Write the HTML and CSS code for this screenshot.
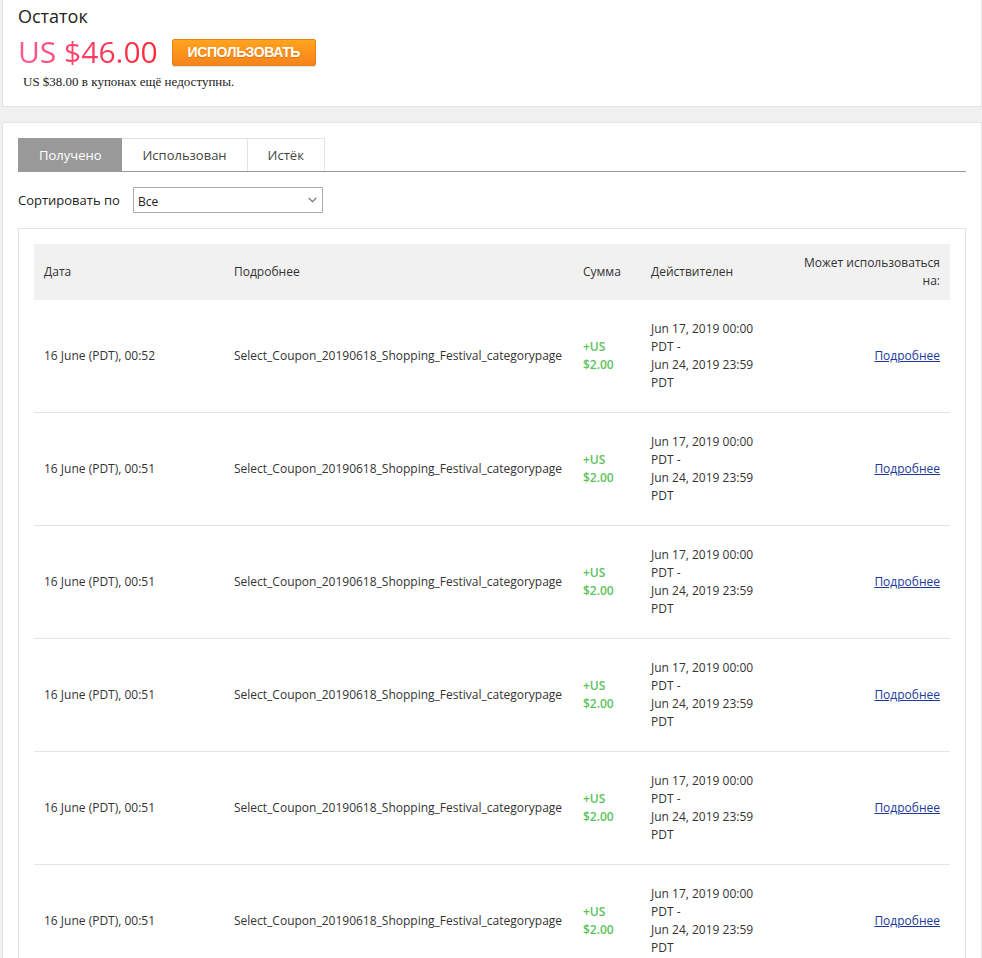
FILE: index.html
```html
<!DOCTYPE html>
<html lang="ru">
<head>
<meta charset="utf-8">
<title>Купоны</title>
<link rel="stylesheet" href="styles.css">
</head>
<body>
<section class="card balance-card">
  <h1 class="title">Остаток</h1>
  <div class="price-row">
    <span class="price">US $46.00</span>
    <button class="use-btn">ИСПОЛЬЗОВАТЬ</button>
  </div>
  <p class="note">US $38.00 в купонах ещё недоступны.</p>
</section>

<section class="card list-card">
  <div class="tabs">
    <div class="tab active">Получено</div>
    <div class="tab">Использован</div>
    <div class="tab">Истёк</div>
  </div>
  <div class="sort-row">
    <span class="sort-label">Сортировать по</span>
    <div class="select">
      <span>Все</span>
      <svg class="chev" width="9" height="6" viewBox="0 0 9 6"><path d="M0.8 1 L4.5 4.6 L8.2 1" fill="none" stroke="#777" stroke-width="1.2"/></svg>
    </div>
  </div>
  <div class="table-box">
    <table class="coupons">
      <colgroup>
        <col class="c1"><col class="c2"><col class="c3"><col class="c4"><col class="c5">
      </colgroup>
      <thead>
        <tr>
          <th>Дата</th>
          <th>Подробнее</th>
          <th>Сумма</th>
          <th>Действителен</th>
          <th class="right">Может использоваться на:</th>
        </tr>
      </thead>
      <tbody>
        <tr>
          <td>16 June (PDT), 00:52</td>
          <td>Select_Coupon_20190618_Shopping_Festival_categorypage</td>
          <td class="amount">+US $2.00</td>
          <td>Jun 17, 2019 00:00 PDT -<br>Jun 24, 2019 23:59 PDT</td>
          <td class="right"><a href="#">Подробнее</a></td>
        </tr>
        <tr>
          <td>16 June (PDT), 00:51</td>
          <td>Select_Coupon_20190618_Shopping_Festival_categorypage</td>
          <td class="amount">+US $2.00</td>
          <td>Jun 17, 2019 00:00 PDT -<br>Jun 24, 2019 23:59 PDT</td>
          <td class="right"><a href="#">Подробнее</a></td>
        </tr>
        <tr>
          <td>16 June (PDT), 00:51</td>
          <td>Select_Coupon_20190618_Shopping_Festival_categorypage</td>
          <td class="amount">+US $2.00</td>
          <td>Jun 17, 2019 00:00 PDT -<br>Jun 24, 2019 23:59 PDT</td>
          <td class="right"><a href="#">Подробнее</a></td>
        </tr>
        <tr>
          <td>16 June (PDT), 00:51</td>
          <td>Select_Coupon_20190618_Shopping_Festival_categorypage</td>
          <td class="amount">+US $2.00</td>
          <td>Jun 17, 2019 00:00 PDT -<br>Jun 24, 2019 23:59 PDT</td>
          <td class="right"><a href="#">Подробнее</a></td>
        </tr>
        <tr>
          <td>16 June (PDT), 00:51</td>
          <td>Select_Coupon_20190618_Shopping_Festival_categorypage</td>
          <td class="amount">+US $2.00</td>
          <td>Jun 17, 2019 00:00 PDT -<br>Jun 24, 2019 23:59 PDT</td>
          <td class="right"><a href="#">Подробнее</a></td>
        </tr>
        <tr>
          <td>16 June (PDT), 00:51</td>
          <td>Select_Coupon_20190618_Shopping_Festival_categorypage</td>
          <td class="amount">+US $2.00</td>
          <td>Jun 17, 2019 00:00 PDT -<br>Jun 24, 2019 23:59 PDT</td>
          <td class="right"><a href="#">Подробнее</a></td>
        </tr>
      </tbody>
    </table>
  </div>
</section>
</body>
</html>
```
FILE: styles.css
```css
html, body {
  margin: 0;
  padding: 0;
}
body {
  background: #f0f0f0;
  font-family: "Open Sans", "Noto Sans", sans-serif;
  color: #333;
}
.card {
  background: #fff;
  border: 1px solid #e4e4e4;
  margin-left: 2px;
  width: 980px;
  box-sizing: border-box;
  padding: 0 15px;
}
.balance-card {
  border-top: 0;
  padding-top: 4px;
  padding-bottom: 16px;
}
.title {
  margin: 0;
  font-size: 18px;
  line-height: 24px;
  font-weight: 400;
  color: #222;
}
.price-row {
  display: flex;
  align-items: center;
  gap: 14px;
  margin-top: 6px;
  height: 36px;
}
.price {
  font-size: 30px;
  line-height: 36px;
  background: linear-gradient(90deg, #ff5c8f 0%, #ff3d63 50%, #ff2a35 100%);
  -webkit-background-clip: text;
  background-clip: text;
  color: transparent;
}
.use-btn {
  width: 144px;
  height: 27px;
  padding: 0;
  border: 1px solid #e8811a;
  border-radius: 2px;
  background: linear-gradient(180deg, #ffa41f 0%, #fc911c 55%, #f6841d 100%);
  color: #fff;
  font-family: "Liberation Sans", Arial, sans-serif;
  font-weight: 700;
  font-size: 14px;
  letter-spacing: -0.4px;
  text-shadow: 0 1px 1px rgba(190, 90, 0, 0.5);
  box-shadow: 0 1px 1px rgba(0, 0, 0, 0.12);
}
.note {
  margin: 3px 0 0 5px;
  font-family: "Liberation Serif", "Times New Roman", serif;
  font-size: 13px;
  line-height: 17px;
  color: #222;
}
.list-card {
  margin-top: 15px;
  padding-top: 15px;
  min-height: 900px;
}
.tabs {
  display: flex;
  border-bottom: 1px solid #999;
}
.tab {
  height: 32px;
  line-height: 32px;
  padding: 0 20px;
  font-size: 13px;
  color: #444;
  border: 1px solid #e4e4e4;
  border-bottom: 0;
  border-left: 0;
  background: #fff;
}
.tab:first-child {
  border-left: 1px solid #e4e4e4;
}
.tab.active {
  background: #999;
  border-color: #999;
  color: #fff;
}
.sort-row {
  display: flex;
  align-items: center;
  gap: 14px;
  margin-top: 15px;
}
.sort-label {
  font-size: 13px;
  color: #222;
  width: 101px;
  white-space: nowrap;
}
.select {
  width: 190px;
  height: 26px;
  box-sizing: border-box;
  border: 1px solid #aaa;
  display: flex;
  align-items: center;
  justify-content: space-between;
  padding: 2px 5px 0 4px;
  font-size: 12px;
  color: #222;
}
.chev {
  display: block;
  margin-top: -3px;
}
.table-box {
  margin-top: 15px;
  border: 1px solid #e4e4e4;
  padding: 15px;
}
.coupons {
  width: 916px;
  table-layout: fixed;
  border-collapse: collapse;
  font-size: 12px;
  line-height: 18px;
}
.c1 { width: 190px; }
.c2 { width: 349px; }
.c3 { width: 68px; }
.c4 { width: 135px; }
.c5 { width: 174px; }
.coupons th {
  background: #f1f1f1;
  font-weight: 400;
  text-align: left;
  padding: 10px;
  vertical-align: middle;
  color: #333;
}
.coupons td {
  padding: 20px 10px;
  vertical-align: middle;
  border-bottom: 1px solid #e4e4e4;
  color: #333;
}
.coupons .right {
  text-align: right;
}
.coupons .amount {
  color: #5cc35c;
  font-weight: 600;
}
.coupons a {
  color: #1b3a9a;
  text-decoration: underline;
}
```
